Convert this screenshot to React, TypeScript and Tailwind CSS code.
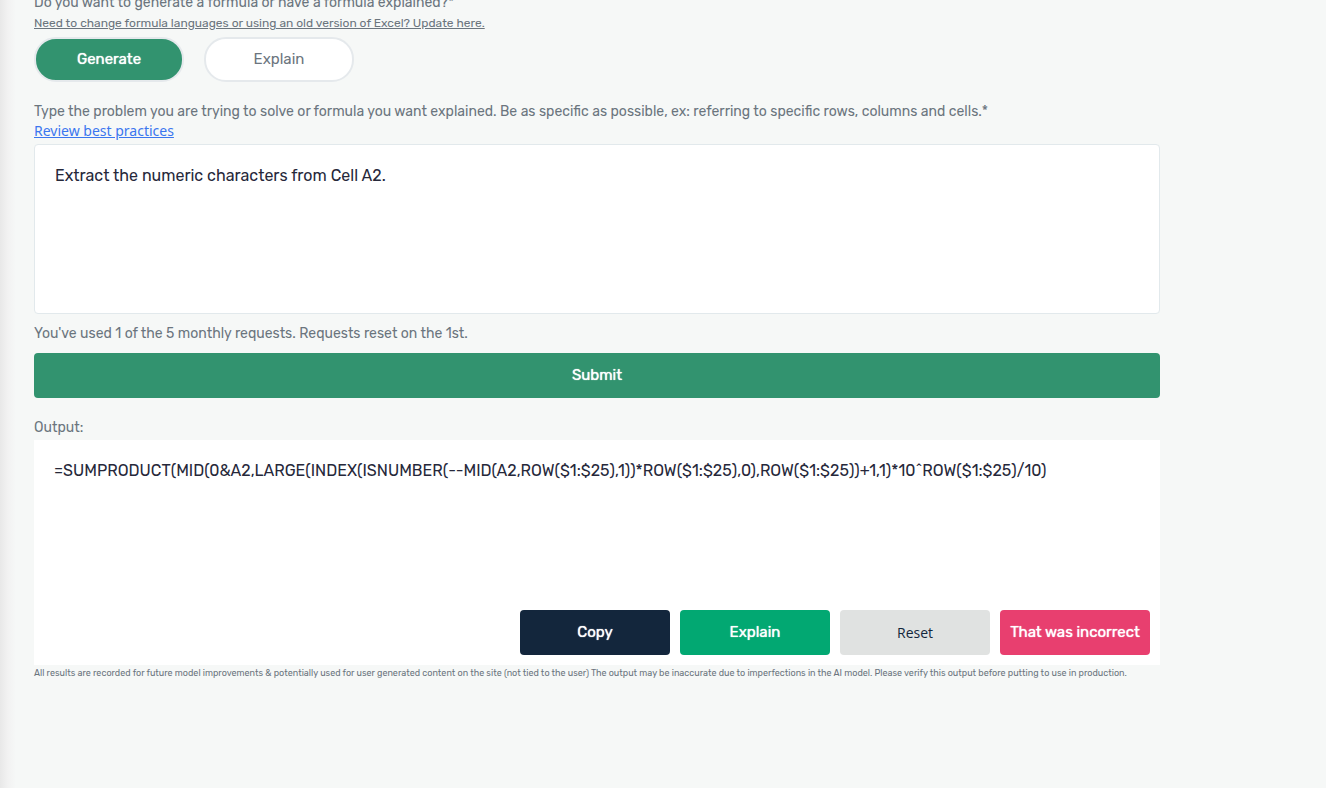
import { useState } from "react";

const FORMULA =
  "=SUMPRODUCT(MID(0&A2,LARGE(INDEX(ISNUMBER(--MID(A2,ROW($1:$25),1))*ROW($1:$25),0),ROW($1:$25))+1,1)*10^ROW($1:$25)/10)";

const modes = ["Generate", "Explain"];

export default function App() {
  const [mode, setMode] = useState("Generate");
  const [prompt, setPrompt] = useState("Extract the numeric characters from Cell A2.");
  const [output, setOutput] = useState(FORMULA);

  return (
    <div className="flex min-h-screen overflow-hidden bg-[#f6f8f7] font-['Rubik','Roboto',sans-serif] text-[#6b757e]">
      <div className="w-4 shrink-0 bg-linear-to-r from-[#e8e8e8] via-[#f2f2f2] to-[#f6f8f7]" />
      <main className="-mt-2 min-w-0 flex-1 pr-[166px] pl-[18px]">
        <p className="text-sm leading-[22px]">Do you want to generate a formula or have a formula explained?*</p>
        <a href="#settings" className="block w-fit text-xs leading-[18px] underline">
          Need to change formula languages or using an old version of Excel? Update here.
        </a>
        <div className="mt-[5px] flex gap-5">
          {modes.map((name) => (
            <button
              key={name}
              type="button"
              aria-pressed={mode === name}
              onClick={() => setMode(name)}
              className={`h-[45px] w-[150px] rounded-[22px] border-2 border-[#e5e9ec] text-[15px] ${
                mode === name ? "bg-[#32936f] text-white text-shadow-[0_0_1px_#ffffff]" : "bg-white"
              }`}
            >
              {name}
            </button>
          ))}
        </div>

        <label htmlFor="prompt" className="mt-[19px] block text-sm leading-[22px]">
          Type the problem you are trying to solve or formula you want explained. Be as specific as possible, ex:
          referring to specific rows, columns and cells.*
        </label>
        <a
          href="#best-practices"
          className="block w-fit font-['Noto_Sans',sans-serif] text-sm leading-4 text-[#3b76ef] underline"
        >
          Review best practices
        </a>
        <textarea
          id="prompt"
          value={prompt}
          onChange={(e) => setPrompt(e.target.value)}
          className="mt-[5px] block h-[170px] w-full resize-none rounded border border-[#e2e9ec] bg-white p-5 text-base leading-[22px] text-[#26283a] outline-none"
        />

        <p className="mt-[9px] text-sm leading-[22px]">
          You've used 1 of the 5 monthly requests. Requests reset on the 1st.
        </p>
        <button
          type="button"
          onClick={() => setOutput(FORMULA)}
          className="mt-2 h-[45px] w-full rounded bg-[#32936f] text-[15px] text-white text-shadow-[0_0_1px_#ffffff]"
        >
          Submit
        </button>

        <label htmlFor="result" className="mt-[19px] block text-sm leading-[22px]">
          Output:
        </label>
        <div className="mt-px flex min-h-[225px] flex-col justify-between bg-white p-[10px]">
          <output id="result" className="block p-[10px] text-base leading-[22px] break-words text-[#26283a]">
            {output}
          </output>
          <div className="flex flex-wrap justify-end gap-[10px] text-[15px] text-white">
            <button
              type="button"
              onClick={() => navigator.clipboard.writeText(output)}
              className="h-[45px] w-[150px] rounded bg-[#13263c] text-shadow-[0_0_1px_#ffffff]"
            >
              Copy
            </button>
            <button
              type="button"
              onClick={() => setMode("Explain")}
              className="h-[45px] w-[150px] rounded bg-[#02a872] text-shadow-[0_0_1px_#ffffff]"
            >
              Explain
            </button>
            <button
              type="button"
              onClick={() => setOutput("")}
              className="h-[45px] w-[150px] rounded bg-[#e0e2e1] font-['Open_Sans',sans-serif] text-sm text-[#13263c]"
            >
              Reset
            </button>
            <button type="button" className="h-[45px] w-[150px] rounded bg-[#e83f6f] text-shadow-[0_0_1px_#ffffff]">
              That was incorrect
            </button>
          </div>
        </div>
        <p className="text-[9px] leading-4">
          All results are recorded for future model improvements &amp; potentially used for user generated content on the
          site (not tied to the user) The output may be inaccurate due to imperfections in the AI model. Please verify
          this output before putting to use in production.
        </p>
      </main>
    </div>
  );
}
